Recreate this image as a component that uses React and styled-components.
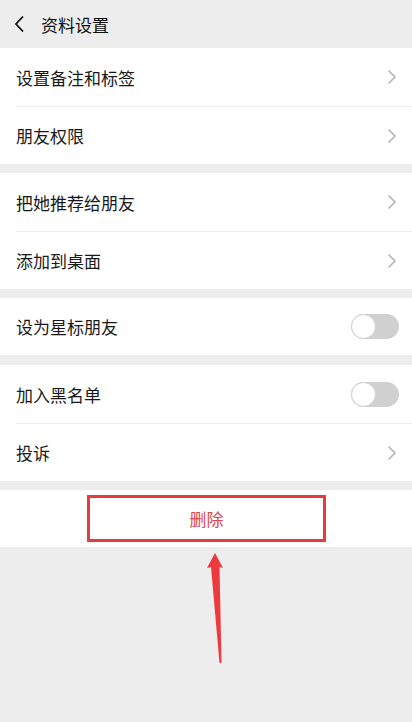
import React from 'react'
import styled, { createGlobalStyle } from 'styled-components'

const GlobalStyle = createGlobalStyle`
  html, body {
    margin: 0;
    padding: 0;
    background: #ededed;
  }
  body {
    font-family: "Noto Sans CJK SC", "Noto Sans", sans-serif;
    color: #111;
  }
`

const Page = styled.div`
  position: relative;
  width: 412px;
  height: 722px;
  background: #ededed;
  overflow: hidden;
`

const Header = styled.div`
  display: flex;
  align-items: center;
  height: 48px;
  padding-left: 13px;
  box-sizing: border-box;
`

const BackIcon = styled.svg`
  width: 14px;
  height: 18px;
  margin-right: 14px;
`

const Title = styled.div`
  font-size: 17px;
  color: #111;
  line-height: 1;
`

const Section = styled.div`
  background: #fff;
  margin-bottom: ${p => p.$gap}px;
`

const Row = styled.div`
  display: flex;
  align-items: center;
  justify-content: space-between;
  height: ${p => p.$h}px;
  padding-right: 13px;
  box-sizing: border-box;
  border-top: ${p => (p.$divider ? '1px solid #ededed' : 'none')};
  margin-left: ${p => (p.$divider ? 16 : 0)}px;
  padding-left: ${p => (p.$divider ? 0 : 16)}px;
`

const Label = styled.span`
  font-size: 17px;
  color: #191919;
`

const Chevron = styled.svg`
  width: 10px;
  height: 16px;
  margin-right: 2px;
`

const Toggle = styled.div`
  position: relative;
  width: 48px;
  height: 25px;
  border-radius: 13px;
  background: #d0d0d0;
`

const Knob = styled.div`
  position: absolute;
  left: 0;
  top: 0;
  width: 25px;
  height: 25px;
  border-radius: 50%;
  background: #fff;
  border: 1px solid #cfcfcf;
  box-sizing: border-box;
`

const DeleteRow = styled.div`
  display: flex;
  align-items: center;
  justify-content: center;
  height: 57px;
  background: #fff;
`

const DeleteBox = styled.div`
  display: flex;
  align-items: center;
  justify-content: center;
  width: 239px;
  height: 47px;
  border: 3px solid #e93b3b;
  box-sizing: border-box;
  margin-left: 1px;
  font-size: 17px;
  color: #e1474a;
`

const Arrow = styled.svg`
  position: absolute;
  left: 200px;
  top: 550px;
  width: 30px;
  height: 116px;
`

const ChevronIcon = () => (
  <Chevron viewBox="0 0 10 16">
    <path d="M1.5 1.5 L8 8 L1.5 14.5" fill="none" stroke="#b2b2b2" strokeWidth="1.5" />
  </Chevron>
)

const Switch = () => (
  <Toggle>
    <Knob />
  </Toggle>
)

const sections = [
  {
    gap: 9,
    items: [
      { name: '设置备注和标签', type: 'link', h: 58 },
      { name: '朋友权限', type: 'link', h: 58 }
    ]
  },
  {
    gap: 9,
    items: [
      { name: '把她推荐给朋友', type: 'link', h: 58 },
      { name: '添加到桌面', type: 'link', h: 58 }
    ]
  },
  {
    gap: 10,
    items: [{ name: '设为星标朋友', type: 'switch', h: 57 }]
  },
  {
    gap: 9,
    items: [
      { name: '加入黑名单', type: 'switch', h: 58 },
      { name: '投诉', type: 'link', h: 58 }
    ]
  }
]

export default function App() {
  return (
    <Page>
      <GlobalStyle />
      <Header>
        <BackIcon viewBox="0 0 14 18">
          <path d="M10 1.5 L3 9 L10 16.5" fill="none" stroke="#111" strokeWidth="1.8" />
        </BackIcon>
        <Title>资料设置</Title>
      </Header>
      {sections.map((sec, i) => (
        <Section key={i} $gap={sec.gap}>
          {sec.items.map((item, j) => (
            <Row key={item.name} $divider={j > 0} $h={item.h}>
              <Label>{item.name}</Label>
              {item.type === 'link' ? <ChevronIcon /> : <Switch />}
            </Row>
          ))}
        </Section>
      ))}
      <DeleteRow>
        <DeleteBox>删除</DeleteBox>
      </DeleteRow>
      <Arrow viewBox="0 0 30 116">
        <polygon points="15,3 23,18 19.5,17 21.5,113 19.5,113 11,17 7,18" fill="#ee3a3f" />
      </Arrow>
    </Page>
  )
}
